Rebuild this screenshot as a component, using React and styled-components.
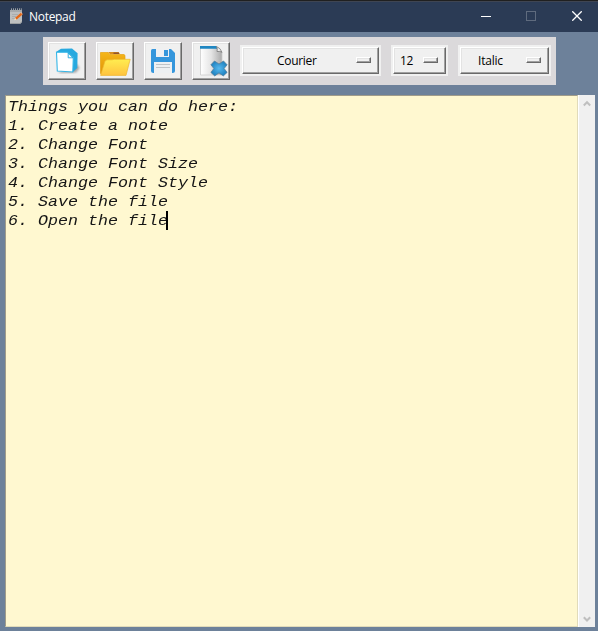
import React from "react";
import styled, { createGlobalStyle } from "styled-components";

const GlobalStyle = createGlobalStyle`
  * { box-sizing: border-box; }
  body { margin: 0; overflow: hidden; background: #6d819a; }
`;

const Window = styled.div`
  display: flex;
  flex-direction: column;
  align-items: center;
  width: 598px;
  height: 631px;
  background: #6d819a;
  font-family: "Open Sans", "Noto Sans", sans-serif;
  font-size: 12px;
  color: #000;
`;

const TitleBar = styled.header`
  display: flex;
  align-items: center;
  width: 100%;
  height: 32px;
  flex: none;
  padding-left: 9px;
  border-top: 1px solid #202020;
  box-shadow: inset 0 1px #3f4552;
  background: #2b3b55;
  color: #fff;
`;

const Title = styled.h1`
  flex: 1;
  margin: 0 0 0 6px;
  font-size: 12px;
  font-weight: 400;
  line-height: 18px;
  letter-spacing: -0.3px;
`;

const WindowControl = styled.button`
  display: flex;
  align-items: center;
  justify-content: center;
  width: 45px;
  height: 31px;
  padding: 0 0 1px ${({ $shift = 0 }) => $shift}px;
  border: 0;
  background: none;
`;

const Toolbar = styled.div`
  display: flex;
  align-items: center;
  gap: 10px;
  width: 513px;
  height: 48px;
  flex: none;
  margin: 5px 0 10px 1px;
  padding: 0 5px;
  background: #dbd9db;
`;

const ToolButton = styled.button`
  display: flex;
  align-items: center;
  justify-content: center;
  width: 38px;
  height: 38px;
  flex: none;
  padding: 0;
  border: 1px solid;
  border-color: #fff #696969 #696969 #fff;
  box-shadow: inset -1px -1px #a0a0a0, inset 1px 1px #e3e3e3;
  background: #f0f0f0;
`;

const SelectFrame = styled.div`
  width: ${({ $width }) => $width}px;
  height: 31px;
  flex: none;
  padding: 2px;
  margin-top: -1px;
  background: #f0f0f0;
`;

const Select = styled.button`
  display: flex;
  align-items: center;
  width: 100%;
  height: 27px;
  padding: 0 7px 0 0;
  border: 1px solid;
  border-color: #fff #696969 #696969 #fff;
  box-shadow: inset -1px -1px #a0a0a0, inset 1px 1px #e3e3e3;
  background: #f0f0f0;
  font: inherit;
  color: #000;
`;

const SelectLabel = styled.span`
  flex: 1;
  padding: 1px 0 0 ${({ $indent }) => $indent}px;
  text-align: left;
  line-height: 18px;
  letter-spacing: ${({ $tracking = 0 }) => $tracking}px;
`;

const Indicator = styled.span`
  width: 15px;
  height: 6px;
  margin-top: -1px;
  border: 1px solid;
  border-color: #fff #696969 #696969 #fff;
  box-shadow: inset -1px -1px #a0a0a0, inset 1px 1px #e3e3e3;
`;

const Workspace = styled.main`
  display: flex;
  width: 590px;
  height: 532px;
  margin-right: 4px;
  margin-left: 6px;
  flex: none;
`;

const Editor = styled.section`
  width: 573px;
  padding: 1px 2px;
  border: 1px solid;
  border-color: #a09c8a #e1dbb9 #e1dbb9 #a09c8a;
  background: #fff8d0;
  font: italic 16.67px/19px "Liberation Mono", monospace;
  color: #151515;
`;

const Line = styled.div`
  display: flex;
  align-items: center;
  height: 19px;
  white-space: pre;
`;

const LineText = styled.span`
  transform: scaleY(0.87);
  transform-origin: 0 14px;
`;

const Caret = styled.span`
  position: relative;
  width: 2px;
  height: 19px;
  margin-left: -2px;
  background: #000;
`;

const Scrollbar = styled.aside`
  display: flex;
  flex-direction: column;
  align-items: center;
  justify-content: space-between;
  width: 17px;
  padding: 5px 0 4px;
  border-left: 1px solid #fff;
  background: #f0f0f0;
`;

const lines = [
  "Things you can do here:",
  "1. Create a note",
  "2. Change Font",
  "3. Change Font Size",
  "4. Change Font Style",
  "5. Save the file",
  "6. Open the file",
];

const fields = [
  { value: "Courier", width: 141, indent: 34, tracking: -0.3 },
  { value: "12", width: 57, indent: 6, tracking: -0.4 },
  { value: "Italic", width: 93, indent: 17, tracking: -0.2 },
];

const NotepadIcon = () => (
  <svg width="14" height="17" viewBox="0 0 14 17">
    <path d="M1 2H13V14L11 16H1Z" fill="#bdbfbf" />
    <path d="M1 15H11L13 13V14L11 16H1Z" fill="#9a9d9f" />
    <path d="M1 3H13" stroke="#8f9498" />
    <path d="M2.5.3V3M4.5.3V3M6.5.3V3M8.5.3V3M10.5.3V3M12.3.3V3" stroke="#a5a9ac" strokeWidth=".9" />
    <path d="M3 6.5H9M3 8.5H7M3 10.5H6" stroke="#a2a5a6" strokeWidth=".7" />
    <path d="m5.6 12 1.2-2.7L11.8 4.7l1.8 1.8L8 11.3Z" fill="#e66816" />
    <path d="m5.2 12.3.9-2.2 1.4 1.4Z" fill="#fff0c9" />
    <path d="m11.5 5 .8-.6 1.5 1.5-.8.8Z" fill="#f7a16c" />
  </svg>
);

const NewIcon = () => (
  <svg width="30" height="30" viewBox="0 0 30 30">
    <defs>
      <filter id="soft"><feGaussianBlur stdDeviation="1" /></filter>
    </defs>
    <path d="M6 27 24 26.5 27.5 22 24 17Z" fill="#777" opacity=".65" filter="url(#soft)" />
    <path d="m4 6 5-3.3L20 2.4l5.6 4.8-.3 14.8-4.8 4.3Z" fill="#27a9df" />
    <path d="M4.5 6.2H15.5l5.8 5.5-.5 14.3L5.3 25Z" fill="#fff" stroke="#35b6e7" strokeWidth="1.1" />
    <path d="M16.2 7v4.8h4.8Z" fill="#f5fdff" stroke="#22a5d9" strokeWidth=".9" />
  </svg>
);

const FolderIcon = () => (
  <svg width="32" height="30" viewBox="0 0 32 30">
    <defs>
      <linearGradient id="folderFront" x1="0" y1="0" x2="0" y2="1">
        <stop stopColor="#ffed50" /><stop offset="1" stopColor="#ffc33f" />
      </linearGradient>
      <linearGradient id="folderBack" x1="0" y1="0" x2="0" y2="1">
        <stop stopColor="#f5b61a" /><stop offset="1" stopColor="#df9305" />
      </linearGradient>
    </defs>
    <path d="M1.5 6.5H9l2 2h14q1 0 1 2v17H1.5Z" fill="url(#folderBack)" stroke="#e6a20f" strokeWidth=".7" />
    <path d="M9 6h10.5l1.5 2h-10Z" fill="#d88e1e" />
    <path d="M14.5 6.5h5.5v1.5h-5.5Z" fill="#915431" />
    <path d="m6 15 2-1.2h5l2.5-.5h15.7L27 29.4H1.6Z" fill="url(#folderFront)" stroke="#edb62f" strokeWidth=".7" />
  </svg>
);

const SaveIcon = () => (
  <svg width="32" height="32" viewBox="0 0 32 32">
    <path d="M5.5 4H24l4 4v17.5q0 2.5-2.5 2.5h-19Q4 28 4 25.5v-20Q4 4 5.5 4Z" fill="#3596dc" />
    <path d="M9 4h13v8H9Z" fill="#eff0f3" />
    <path d="M17 5h4v6h-4Z" fill="#3596dc" />
    <path d="M7 17h18v11H7Z" fill="#edf0f2" />
    <path d="M9 19.5h14M9 22.5h14" stroke="#bfc4c8" strokeWidth="1.2" />
  </svg>
);

const ClearIcon = () => (
  <svg width="34" height="34" viewBox="0 0 34 34">
    <defs>
      <linearGradient id="paper">
        <stop stopColor="#fff" /><stop offset=".5" stopColor="#e4e4e4" /><stop offset="1" stopColor="#aaa" />
      </linearGradient>
      <radialGradient id="cross">
        <stop stopColor="#57b9ee" /><stop offset="1" stopColor="#2285c3" />
      </radialGradient>
    </defs>
    <path d="M6.5 3H23l5 5v23H6.5Z" fill="url(#paper)" stroke="#ccc" strokeWidth=".8" />
    <path d="M6 2h16.5l1 2.8H6Z" fill="#2087c2" />
    <path d="M22.5 2.5q1.3 2.7.5 5 3-.6 5 .8Q26.5 4 22.5 2.5Z" fill="#eee" stroke="#777" strokeWidth=".8" />
    <path d="m20.5 17 4.5 3 4.5-3 3.6 3.8-3 3.7 3 3.9-3.8 3.5-4.3-3-4.3 3-3.8-3.5 3-3.9-3-3.7Z" fill="url(#cross)" stroke="#557f9b" strokeWidth=".8" strokeLinejoin="round" />
  </svg>
);

const icons = [
  ["New file", NewIcon],
  ["Open file", FolderIcon],
  ["Save file", SaveIcon],
  ["Clear file", ClearIcon],
];

const Arrow = ({ down = false }) => (
  <svg width="8" height="7" viewBox="0 0 8 7">
    <path d={down ? "m.8 1.2 3.2 3.3 3.2-3.3" : "M.8 5.5 4 2.2l3.2 3.3"} fill="none" stroke="#bfbfbf" strokeWidth="2" />
  </svg>
);

export default function App() {
  return (
    <Window>
      <GlobalStyle />
      <TitleBar>
        <NotepadIcon />
        <Title>Notepad</Title>
        <WindowControl aria-label="Minimize">
          <svg width="10" height="10"><path d="M0 5.5H10" stroke="#fff" /></svg>
        </WindowControl>
        <WindowControl aria-label="Maximize">
          <svg width="10" height="10"><rect x=".5" y=".5" width="9" height="9" fill="none" stroke="#5f6b7e" /></svg>
        </WindowControl>
        <WindowControl aria-label="Close" $shift={2}>
          <svg width="10" height="10"><path d="m.3.3 9.4 9.4M9.7.3.3 9.7" stroke="#fff" strokeWidth="1.3" /></svg>
        </WindowControl>
      </TitleBar>
      <Toolbar>
        {icons.map(([label, Icon]) => (
          <ToolButton key={label} aria-label={label}><Icon /></ToolButton>
        ))}
        {fields.map(({ value, width, indent, tracking }) => (
          <SelectFrame key={value} $width={width}>
            <Select>
              <SelectLabel $indent={indent} $tracking={tracking}>{value}</SelectLabel>
              <Indicator />
            </Select>
          </SelectFrame>
        ))}
      </Toolbar>
      <Workspace>
        <Editor>
          {lines.map((line, index) => (
            <Line key={line}>
              <LineText>{line}</LineText>
              {index === lines.length - 1 && <Caret />}
            </Line>
          ))}
        </Editor>
        <Scrollbar><Arrow /><Arrow down /></Scrollbar>
      </Workspace>
    </Window>
  );
}
